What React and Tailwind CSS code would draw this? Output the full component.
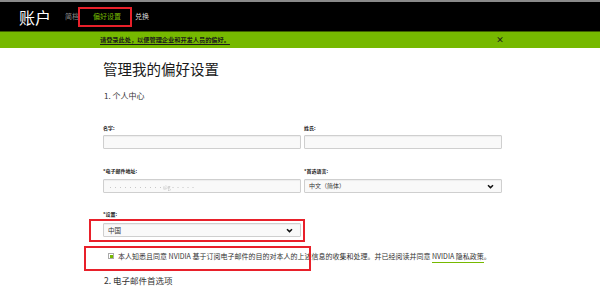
import React from 'react'

const font = "font-['Noto_Sans_CJK_SC','Noto_Sans',sans-serif]"

function Chevron({ className }) {
  return (
    <svg className={className} width="7" height="5" viewBox="0 0 7 5" fill="none">
      <path d="M1 1.2 L3.5 3.6 L6 1.2" stroke="#111" strokeWidth="1.5" />
    </svg>
  )
}

function Field({ label, children }) {
  return (
    <div className="flex flex-col">
      <label className="text-[5px] leading-[6px] font-bold text-[#222]">{label}</label>
      {children}
    </div>
  )
}

const boxCls =
  'h-[14px] w-full bg-[#f9f9f9] border border-[#cfcfcf] rounded-[1px] shadow-[inset_0_1px_1px_rgba(0,0,0,0.05)] flex items-center px-[4px]'

function App() {
  return (
    <div className={`relative w-[600px] h-[287px] overflow-hidden bg-white ${font}`}>
      <div className="h-[2px] bg-[#8a8a8a]" />
      <header className="relative h-[29px] bg-black flex items-center">
        <span className="ml-[19px] text-[16px] leading-none text-white">账户</span>
        <span className="ml-[14px] text-[7px] leading-none text-[#8c8c8c]">简档</span>
        <span className="ml-[14px] text-[7px] leading-none text-[#76b900]">偏好设置</span>
        <span className="ml-[14px] text-[7px] leading-none text-[#d8d8d8]">兑换</span>
      </header>
      <div className="h-[17px] bg-[#76b900] border-t border-[#3d5f00] flex items-center">
        <span className="ml-[100px] text-[6.2px] leading-none font-bold text-[#1a1a1a] underline underline-offset-[2px]">
          请登录此处，以便管理企业和开发人员的偏好。
        </span>
        <span className="ml-[266px] text-[8px] leading-none font-bold text-[#1a1a1a]">×</span>
      </div>

      <div className="pl-[103px]">
        <h1 className="mt-[12px] text-[14.5px] leading-[18px] font-normal text-[#1a1a1a]">管理我的偏好设置</h1>
        <p className="mt-[13px] ml-[1px] text-[8px] leading-[10px] text-[#333]">1. 个人中心</p>

        <div className="mt-[24px] grid grid-cols-[198px_198px] gap-x-[3px]">
          <Field label="名字:">
            <div className={`mt-[4px] ${boxCls}`} />
          </Field>
          <Field label="姓氏:">
            <div className={`mt-[4px] ${boxCls}`} />
          </Field>
        </div>

        <div className="mt-[19px] grid grid-cols-[198px_198px] gap-x-[3px]">
          <Field label="*电子邮件地址:">
            <div className={`mt-[5px] ${boxCls}`}>
              <span className="text-[5px] leading-none text-[#bbb] blur-[0.7px]">•••••••••••@g•••••</span>
            </div>
          </Field>
          <Field label="*首选语言:">
            <div className={`mt-[5px] justify-between ${boxCls}`}>
              <span className="text-[6px] leading-none text-[#333]">中文（简体）</span>
              <Chevron className="mr-[3px]" />
            </div>
          </Field>
        </div>

        <div className="mt-[18px] w-[198px]">
          <Field label="*设置:">
            <div className={`mt-[6px] justify-between ${boxCls}`}>
              <span className="text-[6.5px] leading-none text-[#333]">中国</span>
              <Chevron className="mr-[3px]" />
            </div>
          </Field>
        </div>

        <div className="mt-[14px] h-[10px] flex items-center">
          <span className="ml-[5px] w-[6px] h-[6px] border border-[#aaa] bg-white flex items-center justify-center">
            <span className="w-[3px] h-[3px] bg-[#76b900]" />
          </span>
          <span className="ml-[4px] whitespace-nowrap text-[7px] leading-none text-[#333]">
            本人知悉且同意 NVIDIA 基于订阅电子邮件的目的对本人的上述信息的收集和处理。并已经阅读并同意{' '}
            <span className="border-b border-[#76b900] pb-[1px]">NVIDIA 隐私政策</span>。
          </span>
        </div>

        <p className="mt-[14px] ml-[1px] text-[8.5px] leading-[11px] text-[#333]">2. 电子邮件首选项</p>
      </div>

      <div className="absolute left-[78px] top-[7px] w-[54px] h-[20px] border-2 border-[#e8202a]" />
      <div className="absolute left-[89px] top-[219px] w-[216px] h-[23px] border-2 border-[#e8202a]" />
      <div className="absolute left-[84px] top-[246px] w-[227px] h-[25px] border-2 border-[#e8202a]" />
    </div>
  )
}

export default App
